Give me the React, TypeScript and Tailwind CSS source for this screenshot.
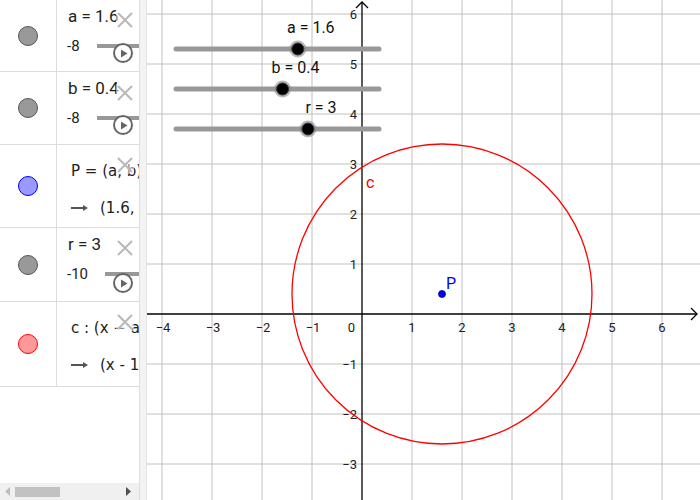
import React from 'react'

const U = 50
const OX = 362
const OY = 314
const px = (x: number) => OX + x * U
const py = (y: number) => OY - y * U

const CloseX = ({ top }: { top: number }) => (
  <div className="absolute left-[59px] w-[18px] h-[18px] bg-white/50" style={{ top }}>
    <svg width="18" height="18" viewBox="0 0 18 18">
      <path d="M2 2 L16 16 M16 2 L2 16" stroke="#b8b8b8" strokeWidth="2" />
    </svg>
  </div>
)

const PlayBtn = ({ top }: { top: number }) => (
  <div className="absolute left-[56px] w-[20px] h-[20px] rounded-full border-2 border-[#666] bg-white flex items-center justify-center" style={{ top }}>
    <svg width="8" height="9" viewBox="0 0 8 9" className="ml-[1px]">
      <path d="M1 0.5 L7.5 4.5 L1 8.5 Z" fill="#666" />
    </svg>
  </div>
)

const Dot = ({ fill, stroke }: { fill: string; stroke: string }) => (
  <div className="w-[20px] h-[20px] rounded-full border" style={{ backgroundColor: fill, borderColor: stroke }} />
)

const SliderRow = ({
  label, min, h, barLeft, playTop, xTop,
}: { label: string; min: string; h: number; barLeft: number; playTop: number; xTop: number }) => (
  <div className="flex border-b border-[#dcdcdc]" style={{ height: h }}>
    <div className="w-[57px] shrink-0 border-r border-[#dcdcdc] flex items-center justify-center">
      <Dot fill="#999999" stroke="#555555" />
    </div>
    <div className="relative flex-1 overflow-hidden pt-[5px]">
      <div className="pl-[11px] text-[17px] leading-[22px] text-[#222] whitespace-nowrap">{label}</div>
      <div className="flex items-center mt-[9px] h-[20px]">
        <span className="pl-[10px] text-[15px] text-[#222]">{min}</span>
        <div className="h-[4px] bg-[#999] flex-1" style={{ marginLeft: barLeft }} />
      </div>
      <PlayBtn top={playTop} />
      <CloseX top={xTop} />
    </div>
  </div>
)

const ExprRow = ({
  dot, def, val, h, xTop,
}: { dot: [string, string]; def: React.ReactNode; val: string; h: number; xTop: number }) => (
  <div className="flex border-b border-[#dcdcdc]" style={{ height: h }}>
    <div className="w-[57px] shrink-0 border-r border-[#dcdcdc] flex items-center justify-center">
      <Dot fill={dot[0]} stroke={dot[1]} />
    </div>
    <div className="relative flex-1 overflow-hidden pt-[16px] font-['DejaVu_Sans',sans-serif] text-[15px] text-[#222]">
      <div className="pl-[14px] leading-[20px] whitespace-nowrap">{def}</div>
      <div className="flex items-center pl-[14px] mt-[17px] leading-[20px] whitespace-nowrap">
        <svg width="18" height="8" viewBox="0 0 18 8" className="shrink-0">
          <path d="M0 4 H13" stroke="#555" strokeWidth="2" />
          <path d="M12 1 L17 4 L12 7 Z" fill="#555" />
        </svg>
        <span className="ml-[11px]">{val}</span>
      </div>
      <CloseX top={xTop} />
    </div>
  </div>
)

const GSlider = ({ y, value, min, max, label }: { y: number; value: number; min: number; max: number; label: string }) => {
  const x0 = 176
  const x1 = 379
  const tx = x0 + ((value - min) / (max - min)) * (x1 - x0)
  return (
    <g>
      <line x1={x0} y1={y} x2={x1} y2={y} stroke="#999" strokeWidth="5" strokeLinecap="round" />
      <circle cx={tx} cy={y} r="8.5" fill="#888" opacity="0.6" />
      <circle cx={tx} cy={y} r="6" fill="#000" stroke="#333" strokeWidth="1" />
      <text x={tx + 13} y={y - 16} textAnchor="middle" fontSize="16" fill="#111">{label}</text>
    </g>
  )
}

const Graphics = () => {
  const vx = [-4, -3, -2, -1, 1, 2, 3, 4, 5, 6]
  const vy = [-3, -2, -1, 1, 2, 3, 4, 5, 6]
  return (
    <svg className="block flex-1 h-full" viewBox="147 0 553 500" style={{ fontFamily: 'Roboto, sans-serif' }}>
      <rect x="147" y="0" width="553" height="500" fill="#fff" />
      {vx.map(i => (
        <line key={'gx' + i} x1={px(i)} y1={0} x2={px(i)} y2={500} stroke="#c0c0c0" strokeWidth="1" />
      ))}
      {vy.map(i => (
        <line key={'gy' + i} x1={147} y1={py(i)} x2={700} y2={py(i)} stroke="#c0c0c0" strokeWidth="1" />
      ))}
      <line x1={147} y1={OY} x2={697} y2={OY} stroke="#000" strokeWidth="1.3" />
      <path d={`M691 ${OY - 6} L697 ${OY} L691 ${OY + 6}`} fill="none" stroke="#000" strokeWidth="1.3" />
      <line x1={OX} y1={2} x2={OX} y2={500} stroke="#000" strokeWidth="1.3" />
      <path d={`M${OX - 6} 8 L${OX} 2 L${OX + 6} 8`} fill="none" stroke="#000" strokeWidth="1.3" />
      {vx.map(i => (
        <text key={'lx' + i} x={px(i) + (i < 0 ? 1 : 0)} y={OY + 18} textAnchor="middle" fontSize="13" fill="#222">
          {i < 0 ? '\u2212' + -i : i}
        </text>
      ))}
      <text x={OX - 7} y={OY + 18} textAnchor="end" fontSize="13" fill="#222">0</text>
      {vy.map(i => (
        <text key={'ly' + i} x={OX - 5} y={py(i) + 5} textAnchor="end" fontSize="13" fill="#222">
          {i < 0 ? '\u2212' + -i : i}
        </text>
      ))}
      <circle cx={px(1.6)} cy={py(0.4)} r={3 * U} fill="none" stroke="#ff0000" strokeWidth="1.3" />
      <text x={366} y={188} fontSize="16" fill="#ff0000">c</text>
      <circle cx={px(1.6)} cy={py(0.4)} r="3.5" fill="#0000ff" stroke="#000080" strokeWidth="0.8" />
      <text x={446} y={289} fontSize="16" fill="#0000ff">P</text>
      <GSlider y={49} value={1.6} min={-8} max={8} label="a = 1.6" />
      <GSlider y={89} value={0.4} min={-8} max={8} label="b = 0.4" />
      <GSlider y={129} value={3} min={-10} max={10} label="r = 3" />
    </svg>
  )
}

export default function App() {
  return (
    <div className="w-[700px] h-[500px] flex bg-white overflow-hidden font-['Roboto',sans-serif]">
      <div className="w-[139px] shrink-0 flex flex-col">
        <div className="flex-1 overflow-hidden">
          <SliderRow label="a = 1.6" min="-8" h={72} barLeft={17} playTop={43} xTop={11} />
          <SliderRow label="b = 0.4" min="-8" h={73} barLeft={17} playTop={43} xTop={12} />
          <ExprRow
            dot={['#9999ff', '#0000ff']}
            def={<>P = (a, b)</>}
            val="(1.6, 0.4)"
            h={83}
            xTop={11}
          />
          <SliderRow label="r = 3" min="-10" h={74} barLeft={17} playTop={45} xTop={11} />
          <ExprRow
            dot={['#ff9999', '#ff0000']}
            def={<>c : (x − a)² + (y − b)² = r²</>}
            val="(x - 1.6)² + (y - 0.4)² = 9"
            h={85}
            xTop={11}
          />
        </div>
        <div className="h-[17px] bg-[#f0f0f0] flex items-center px-[4px]">
          <svg width="6" height="9" viewBox="0 0 6 9" className="ml-[1px]">
            <path d="M5 0 L0 4.5 L5 9 Z" fill="#bdbdbd" />
          </svg>
          <div className="ml-[4px] w-[45px] h-[10px] bg-[#c2c2c2]" />
          <div className="flex-1" />
          <svg width="6" height="9" viewBox="0 0 6 9" className="mr-[3px]">
            <path d="M0 0 L5 4.5 L0 9 Z" fill="#505050" />
          </svg>
        </div>
      </div>
      <div className="w-[8px] shrink-0 bg-[#f3f3f3] border-l border-[#dedede] border-r border-r-[#e4e4e4]" />
      <Graphics />
    </div>
  )
}
